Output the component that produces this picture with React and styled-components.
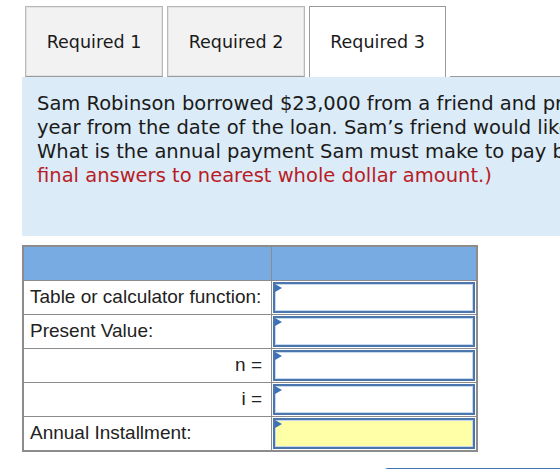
import styled, { createGlobalStyle } from "styled-components";

const GlobalStyle = createGlobalStyle`
  html, body {
    margin: 0;
    padding: 0;
    background: #ffffff;
    overflow: hidden;
  }
`;

const tabs = ["Required 1", "Required 2", "Required 3"];

const lines = [
  { text: "Sam Robinson borrowed $23,000 from a friend and promised to pay back the loan by making four equal payments at the end of each year beginning one" },
  { text: "year from the date of the loan. Sam\u2019s friend would like to receive a 5% return on the loan." },
  { text: "What is the annual payment Sam must make to pay back the loan? ", red: "(Use appropriate factor(s) from the tables provided. Round your" },
  { red: "final answers to nearest whole dollar amount.)" },
];

const rows = [
  { label: "Table or calculator function:" },
  { label: "Present Value:" },
  { label: "n =", right: true },
  { label: "i =", right: true },
  { label: "Annual Installment:", highlight: true },
];

const App = () => {
  return (
    <>
      <GlobalStyle />
      <Page>
        <TabBar>
          {tabs.map((t, i) => (
            <Tab key={t} $active={i === 2}>{t}</Tab>
          ))}
          <TabFill />
        </TabBar>
        <Question>
          {lines.map((l, i) => (
            <Line key={i}>
              {l.text}
              {l.red && <Red>{l.red}</Red>}
            </Line>
          ))}
        </Question>
        <Grid>
          <tbody>
            <HeaderRow>
              <HeaderCell />
              <HeaderCell />
            </HeaderRow>
            {rows.map((r) => (
              <Row key={r.label}>
                <LabelCell $right={r.right}>{r.label}</LabelCell>
                <InputCell>
                  <Field $highlight={r.highlight} />
                </InputCell>
              </Row>
            ))}
          </tbody>
        </Grid>
        <Footer>
          <NextButton />
        </Footer>
      </Page>
    </>
  );
};

const Page = styled.div`
  padding: 6px 0 0 22px;
  width: 760px;
`;

const TabBar = styled.div`
  display: flex;
  align-items: flex-end;
  gap: 4px;
  padding-left: 3px;
`;

const Tab = styled.div`
  box-sizing: border-box;
  width: ${(p) => (p.$active ? "137px" : "138px")};
  height: 71px;
  display: flex;
  align-items: center;
  justify-content: center;
  font-family: "DejaVu Sans", Verdana, sans-serif;
  font-size: 17.5px;
  color: #1a1a1a;
  background: ${(p) => (p.$active ? "#ffffff" : "#f2f2f2")};
  border: 1px solid ${(p) => (p.$active ? "#9a9a9a" : "#b8b8b8")};
  border-bottom: ${(p) => (p.$active ? "none" : "1px solid #9a9a9a")};
  box-shadow: ${(p) => (p.$active ? "none" : "inset 0 0 0 1px #e2e2e2")};
  padding-bottom: ${(p) => (p.$active ? "1px" : "0")};
`;

const TabFill = styled.div`
  flex: 1;
  border-bottom: 1px solid #9a9a9a;
`;

const Question = styled.div`
  box-sizing: border-box;
  height: 159px;
  background: #dbebf8;
  padding: 15px 0 0 15px;
  font-family: "DejaVu Sans", Verdana, sans-serif;
  font-size: 19.5px;
  line-height: 24px;
  color: #1a1a1a;
`;

const Line = styled.div`
  white-space: nowrap;
`;

const Red = styled.span`
  color: #b81c26;
`;

const Grid = styled.table`
  margin-top: 9px;
  border-collapse: collapse;
  table-layout: fixed;
  border: 2px solid #8c8c8c;
  width: 456px;
  font-family: "Liberation Sans", Arial, sans-serif;
  font-size: 19px;
  color: #222222;
`;

const HeaderRow = styled.tr`
  height: 34px;
  background: #78abe2;
`;

const HeaderCell = styled.td`
  border: 1px solid #8c8c8c;
  padding: 0;
  &:first-child {
    width: 247px;
  }
`;

const Row = styled.tr`
  height: 34px;
`;

const LabelCell = styled.td`
  border: 1px solid #8c8c8c;
  padding: 0 9px 0 6px;
  white-space: nowrap;
  text-align: ${(p) => (p.$right ? "right" : "left")};
  vertical-align: middle;
`;

const InputCell = styled.td`
  border: 1px solid #8c8c8c;
  padding: 1px;
`;

const Field = styled.div`
  position: relative;
  box-sizing: border-box;
  height: 31px;
  background: ${(p) => (p.$highlight ? "#ffffa8" : "#ffffff")};
  border: 2px solid #4a76ad;
  box-shadow: inset 0 0 0 1px #c4d8ef;
  &::before {
    content: "";
    position: absolute;
    left: 0;
    top: 0;
    border-top: 4px solid transparent;
    border-bottom: 4px solid transparent;
    border-left: 7px solid #3b72b8;
  }
`;

const Footer = styled.div`
  display: flex;
  padding: 16px 0 0 360px;
`;

const NextButton = styled.div`
  width: 220px;
  height: 36px;
  background: #3f74b6;
  border-radius: 6px;
`;

export default App;
